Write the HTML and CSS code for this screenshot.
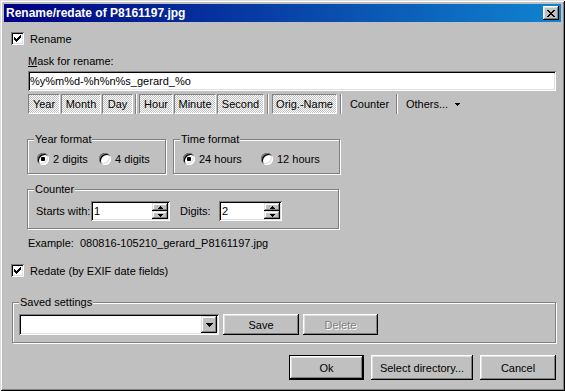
FILE: index.html
```html
<!DOCTYPE html>
<html>
<head>
    <title>Rename/redate of P8161197.jpg</title>
    <link rel="stylesheet" href="styles.css">
</head>
<body>
    <div class="window">
        <div class="titlebar">
            <span class="title">Rename/redate of P8161197.jpg</span>
            <span class="close-btn">
                <svg width="8" height="7" viewBox="0 0 8 7"><path d="M0 0h2v1h-2z M6 0h2v1h-2z M1 1h2v1h-2z M5 1h2v1h-2z M2 2h4v1h-4z M3 3h2v1h-2z M2 4h4v1h-4z M1 5h2v1h-2z M5 5h2v1h-2z M0 6h2v1h-2z M6 6h2v1h-2z" fill="#000"/></svg>
            </span>
        </div>

        <div class="dialog-body">
            <div class="check-row rename-row">
                <span class="checkbox"><svg width="7" height="7" viewBox="0 0 7 7"><path d="M6 0h1v1h-1z M5 1h2v1h-2z M0 2h1v1h-1z M4 2h3v1h-3z M0 3h2v1h-2z M3 3h3v1h-3z M0 4h5v1h-5z M1 5h3v1h-3z M2 6h1v1h-1z" fill="#000"/></svg></span>
                <span>Rename</span>
            </div>

            <div class="mask-label"><u>M</u>ask for rename:</div>
            <div class="edit mask-edit">%y%m%d-%h%n%s_gerard_%o</div>

            <div class="toolbar">
                <span class="tb-btn w-year">Year</span>
                <span class="tb-btn w-month">Month</span>
                <span class="tb-btn w-day">Day</span>
                <span class="tb-sep"></span>
                <span class="tb-btn w-hour">Hour</span>
                <span class="tb-btn w-minute">Minute</span>
                <span class="tb-btn w-second">Second</span>
                <span class="tb-sep wide"></span>
                <span class="tb-btn w-orig">Orig.-Name</span>
                <span class="tb-sep wide"></span>
                <span class="tb-flat w-counter">Counter</span>
                <span class="tb-sep"></span>
                <span class="tb-flat others">Others...
                    <svg width="5" height="3" viewBox="0 0 5 3"><path d="M0 0h5v1h-5z M1 1h3v1h-3z M2 2h1v1h-1z" fill="#000"/></svg>
                </span>
            </div>

            <div class="group-row">
                <fieldset class="group year-group">
                    <legend>Year format</legend>
                    <div class="radio-row">
                        <span class="option opt-2digits"><span class="radio on"></span>2 digits</span>
                        <span class="option"><span class="radio"></span>4 digits</span>
                    </div>
                </fieldset>
                <fieldset class="group time-group">
                    <legend>Time format</legend>
                    <div class="radio-row">
                        <span class="option opt-24h"><span class="radio on"></span>24 hours</span>
                        <span class="option"><span class="radio"></span>12 hours</span>
                    </div>
                </fieldset>
            </div>

            <fieldset class="group counter-group">
                <legend>Counter</legend>
                <div class="counter-row">
                    <span class="starts-label">Starts with:</span>
                    <div class="spin starts-spin">
                        <span class="spin-text">1</span>
                        <span class="spin-btns">
                            <span class="spin-btn"><svg width="5" height="3" viewBox="0 0 5 3"><path d="M2 0h1v1h-1z M1 1h3v1h-3z M0 2h5v1h-5z" fill="#000"/></svg></span>
                            <span class="spin-btn"><svg width="5" height="3" viewBox="0 0 5 3"><path d="M0 0h5v1h-5z M1 1h3v1h-3z M2 2h1v1h-1z" fill="#000"/></svg></span>
                        </span>
                    </div>
                    <span class="digits-label">Digits:</span>
                    <div class="spin digits-spin">
                        <span class="spin-text">2</span>
                        <span class="spin-btns">
                            <span class="spin-btn"><svg width="5" height="3" viewBox="0 0 5 3"><path d="M2 0h1v1h-1z M1 1h3v1h-3z M0 2h5v1h-5z" fill="#000"/></svg></span>
                            <span class="spin-btn"><svg width="5" height="3" viewBox="0 0 5 3"><path d="M0 0h5v1h-5z M1 1h3v1h-3z M2 2h1v1h-1z" fill="#000"/></svg></span>
                        </span>
                    </div>
                </div>
            </fieldset>

            <div class="example">Example:&nbsp; 080816-105210_gerard_P8161197.jpg</div>

            <div class="check-row redate-row">
                <span class="checkbox"><svg width="7" height="7" viewBox="0 0 7 7"><path d="M6 0h1v1h-1z M5 1h2v1h-2z M0 2h1v1h-1z M4 2h3v1h-3z M0 3h2v1h-2z M3 3h3v1h-3z M0 4h5v1h-5z M1 5h3v1h-3z M2 6h1v1h-1z" fill="#000"/></svg></span>
                <span>Redate (by EXIF date fields)</span>
            </div>

            <fieldset class="group saved-group">
                <legend>Saved settings</legend>
                <div class="saved-row">
                    <div class="combo">
                        <span class="combo-text"></span>
                        <span class="combo-btn"><svg width="7" height="4" viewBox="0 0 7 4"><path d="M0 0h7v1h-7z M1 1h5v1h-5z M2 2h3v1h-3z M3 3h1v1h-1z" fill="#000"/></svg></span>
                    </div>
                    <span class="button save-btn">Save</span>
                    <span class="button delete-btn disabled">Delete</span>
                </div>
            </fieldset>

            <div class="dialog-buttons">
                <span class="button default ok-btn">Ok</span>
                <span class="button dir-btn">Select directory...</span>
                <span class="button cancel-btn">Cancel</span>
            </div>
        </div>
    </div>
</body>
</html>
```

FILE: styles.css
```css
* {
    box-sizing: border-box;
}

body {
    margin: 0;
    background-color: #c0c0c0;
    font-family: "Liberation Sans", Arial, sans-serif;
    font-size: 11px;
    color: #000;
}

/* window frame */
.window {
    width: 565px;
    height: 391px;
    padding: 4px;
    background-color: #c0c0c0;
    box-shadow: inset 1px 1px #dfdfdf, inset -1px -1px #000, inset 2px 2px #fff, inset -2px -2px #808080;
}

.titlebar {
    display: flex;
    align-items: center;
    justify-content: space-between;
    height: 18px;
    padding: 0 2px;
    background-image: linear-gradient(to right, #000080, #1084d0);
    color: #fff;
    font-weight: bold;
    font-size: 12px;
}

.close-btn {
    display: flex;
    align-items: center;
    justify-content: center;
    width: 16px;
    height: 14px;
    background-color: #c0c0c0;
    box-shadow: inset -1px -1px #000, inset 1px 1px #fff, inset -2px -2px #808080, inset 2px 2px #dfdfdf;
}

.dialog-body {
    display: flex;
    flex-direction: column;
    align-items: flex-start;
}

/* checkboxes */
.check-row {
    display: flex;
    align-items: center;
    gap: 6px;
    height: 13px;
    margin-left: 7px;
}

.rename-row {
    margin-top: 10px;
}

.redate-row {
    margin-top: 14px;
}

.checkbox {
    display: flex;
    align-items: center;
    justify-content: center;
    width: 13px;
    height: 13px;
    background-color: #fff;
    box-shadow: inset 1px 1px #808080, inset -1px -1px #fff, inset 2px 2px #000, inset -2px -2px #dfdfdf;
}

/* mask edit */
.mask-label {
    margin: 10px 0 0 24px;
    line-height: 13px;
}

.edit {
    background-color: #fff;
    box-shadow: inset 1px 1px #808080, inset -1px -1px #fff, inset 2px 2px #000, inset -2px -2px #dfdfdf;
}

.mask-edit {
    width: 528px;
    height: 20px;
    margin: 3px 0 0 24px;
    padding: 0 2px;
    line-height: 20px;
}

/* toolbar */
.toolbar {
    display: flex;
    align-items: center;
    height: 20px;
    margin: 3px 0 0 24px;
}

.tb-btn {
    height: 20px;
    line-height: 18px;
    text-align: center;
    border: 1px solid;
    border-color: #808080 #fff #fff #808080;
    background: repeating-conic-gradient(#fff 0 25%, #c0c0c0 0 50%) 0 0 / 2px 2px;
}

.tb-btn + .tb-btn {
    margin-left: 1px;
}

.w-year { width: 32px; }
.w-month { width: 40px; }
.w-day { width: 31px; }
.w-hour { width: 34px; }
.w-minute { width: 42px; }
.w-second { width: 47px; }
.w-orig { width: 65px; }

.tb-sep {
    width: 2px;
    height: 20px;
    margin: 0 2px;
    border-left: 1px solid #808080;
    border-right: 1px solid #fff;
}

.tb-sep.wide {
    margin: 0 3px;
}

.tb-flat {
    height: 20px;
    line-height: 20px;
}

.w-counter {
    width: 49px;
    text-align: center;
}

.others {
    display: flex;
    align-items: center;
    padding-left: 6px;
}

.others svg {
    margin-left: 7px;
}

/* group boxes */
.group {
    margin: 0;
    padding: 0 6px;
    min-width: 0;
    border: 1px solid #808080;
    box-shadow: 1px 1px 0 #fff, inset 1px 1px 0 #fff;
}

.group legend {
    padding: 0 1px;
    line-height: 13px;
    background-color: #c0c0c0;
}

.group-row {
    display: flex;
    gap: 7px;
    margin: 19px 0 0 23px;
}

.year-group {
    width: 139px;
    padding-top: 6px;
    padding-bottom: 8px;
}

.time-group {
    width: 167px;
    padding-top: 6px;
    padding-bottom: 8px;
}

.radio-row {
    display: flex;
    align-items: center;
    height: 13px;
    margin-left: 3px;
}

.option {
    display: flex;
    align-items: center;
    gap: 4px;
}

.opt-2digits { width: 62px; }
.opt-24h { width: 78px; }

.radio {
    width: 12px;
    height: 12px;
    border-radius: 50%;
    background-color: #fff;
    box-shadow: inset 1px 1px #808080, inset -1px -1px #fff, inset 2px 2px #000, inset -2px -2px #dfdfdf;
}

.radio.on {
    background: radial-gradient(circle, #000 0 2px, #fff 2.5px);
}

.counter-group {
    width: 312px;
    margin: 9px 0 0 23px;
    padding-top: 5px;
    padding-bottom: 7px;
}

.counter-row {
    display: flex;
    align-items: center;
    height: 20px;
    margin-left: 2px;
}

.starts-label {
    width: 55px;
}

.digits-label {
    margin-left: 10px;
    width: 39px;
}

.spin {
    display: flex;
    height: 20px;
    padding: 2px;
    background-color: #fff;
    box-shadow: inset 1px 1px #808080, inset -1px -1px #fff, inset 2px 2px #000, inset -2px -2px #dfdfdf;
}

.starts-spin { width: 79px; }
.digits-spin { width: 63px; }

.spin-text {
    flex: 1;
    line-height: 16px;
    padding-left: 1px;
}

.spin-btns {
    display: flex;
    flex-direction: column;
    width: 16px;
}

.spin-btn {
    flex: 1;
    display: flex;
    align-items: center;
    justify-content: center;
    background-color: #c0c0c0;
    box-shadow: inset -1px -1px #000, inset 1px 1px #dfdfdf, inset -2px -2px #808080, inset 2px 2px #fff;
}

.example {
    margin: 8px 0 0 24px;
    line-height: 13px;
}

/* saved settings */
.saved-group {
    width: 544px;
    margin: 19px 0 0 8px;
    padding: 5px 6px 7px;
}

.saved-row {
    display: flex;
    align-items: center;
    height: 21px;
}

.combo {
    display: flex;
    width: 200px;
    height: 21px;
    padding: 2px;
    background-color: #fff;
    box-shadow: inset 1px 1px #808080, inset -1px -1px #fff, inset 2px 2px #000, inset -2px -2px #dfdfdf;
}

.combo-text {
    flex: 1;
}

.combo-btn {
    display: flex;
    align-items: center;
    justify-content: center;
    width: 16px;
    background-color: #c0c0c0;
    box-shadow: inset -1px -1px #000, inset 1px 1px #dfdfdf, inset -2px -2px #808080, inset 2px 2px #fff;
}

/* push buttons */
.button {
    display: flex;
    align-items: center;
    justify-content: center;
    background-color: #c0c0c0;
    box-shadow: inset -1px -1px #000, inset 1px 1px #fff, inset -2px -2px #808080, inset 2px 2px #dfdfdf;
}

.button.default {
    border: 1px solid #000;
}

.button.disabled {
    color: #808080;
    text-shadow: 1px 1px 0 #fff;
}

.save-btn {
    width: 76px;
    height: 21px;
    margin-left: 4px;
}

.delete-btn {
    width: 75px;
    height: 21px;
    margin-left: 4px;
}

.dialog-buttons {
    display: flex;
    gap: 7px;
    align-self: flex-end;
    margin: 12px 5px 0 0;
}

.dialog-buttons .button {
    height: 25px;
}

.ok-btn { width: 75px; }
.dir-btn { width: 102px; }
.cancel-btn { width: 76px; }
```
